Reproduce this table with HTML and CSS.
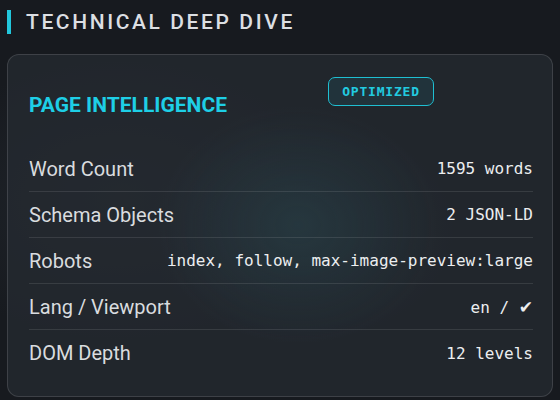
FILE: index.html
```html
<!DOCTYPE html>
<html>
<head>
<meta charset="utf-8">
<link rel="stylesheet" href="styles.css">
</head>
<body>
<div class="page">
  <h2 class="section-title"><span class="accent"></span><span class="title-text">TECHNICAL DEEP DIVE</span></h2>
  <div class="card">
    <div class="card-head">
      <h3 class="card-title">PAGE INTELLIGENCE</h3>
      <span class="badge">OPTIMIZED</span>
    </div>
    <div class="rows">
      <div class="row"><span class="label">Word Count</span><span class="value">1595 words</span></div>
      <div class="row"><span class="label">Schema Objects</span><span class="value">2 JSON-LD</span></div>
      <div class="row"><span class="label">Robots</span><span class="value">index, follow, max-image-preview:large</span></div>
      <div class="row"><span class="label">Lang / Viewport</span><span class="value">en / <span class="check">✔</span></span></div>
      <div class="row"><span class="label">DOM Depth</span><span class="value">12 levels</span></div>
    </div>
  </div>
</div>
</body>
</html>
```

FILE: styles.css
```css
html, body {
  margin: 0;
  padding: 0;
}
body {
  width: 560px;
  height: 400px;
  overflow: hidden;
  background:
    radial-gradient(ellipse 220px 160px at 300px 230px, rgba(40, 80, 90, 0.35), transparent 70%),
    radial-gradient(ellipse 300px 200px at 120px 200px, rgba(60, 70, 80, 0.25), transparent 70%),
    #171a1f;
  font-family: Roboto, "Noto Sans", sans-serif;
  color: #e6e8eb;
}
.page {
  padding: 10px 7px 0 7px;
}
.section-title {
  display: flex;
  align-items: center;
  gap: 15px;
  margin: 0;
  height: 24px;
}
.accent {
  width: 4px;
  height: 24px;
  background: #22c7dc;
}
.title-text {
  font-size: 21px;
  font-weight: 500;
  letter-spacing: 2.6px;
  color: #dcdfe3;
}
.card {
  margin-top: 20px;
  height: 343px;
  box-sizing: border-box;
  border: 1px solid rgba(255, 255, 255, 0.13);
  border-radius: 12px;
  background:
    radial-gradient(ellipse 200px 170px at 290px 170px, rgba(45, 85, 95, 0.28), transparent 70%),
    rgba(38, 43, 49, 0.75);
  padding: 22px 19px 0 21px;
}
.card-head {
  display: flex;
  align-items: flex-start;
  gap: 101px;
  height: 69px;
}
.card-title {
  margin: 15px 0 0 0;
  font-size: 21px;
  line-height: 26px;
  font-weight: 700;
  color: #1ecfe6;
  letter-spacing: 0;
}
.badge {
  box-sizing: border-box;
  width: 106px;
  height: 29px;
  display: flex;
  align-items: center;
  justify-content: center;
  border: 1px solid #1fbfd2;
  border-radius: 7px;
  background: rgba(30, 150, 170, 0.12);
  color: #22cbe0;
  font-family: "DejaVu Sans Mono", monospace;
  font-size: 13px;
  font-weight: 700;
  letter-spacing: 0.8px;
}
.rows {
  display: flex;
  flex-direction: column;
}
.row {
  height: 46px;
  box-sizing: border-box;
  display: flex;
  align-items: center;
  justify-content: space-between;
  border-bottom: 1px solid rgba(255, 255, 255, 0.1);
}
.row:last-child {
  border-bottom: none;
}
.label {
  font-size: 20px;
  color: #d9dcdf;
}
.value {
  font-family: "DejaVu Sans Mono", monospace;
  font-size: 16px;
  color: #eceef0;
}
.check {
  font-family: "DejaVu Sans", sans-serif;
  font-size: 17px;
}
```
